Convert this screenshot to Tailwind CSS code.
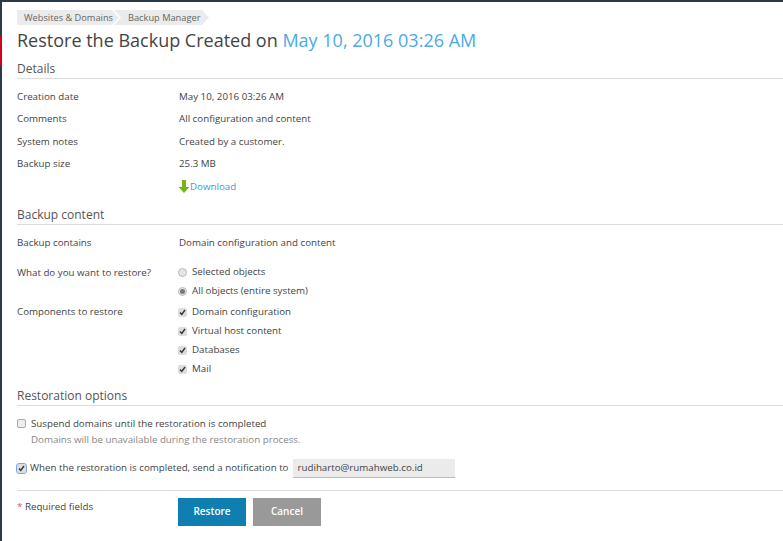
<!DOCTYPE html>
<html lang="en">
<head>
    <meta charset="UTF-8">
    <title>Restore the Backup</title>
    <script src="https://cdn.jsdelivr.net/npm/@tailwindcss/browser@4"></script>
</head>
<body class="bg-white font-['Open_Sans',sans-serif] text-[#444] text-[9.75px] overflow-hidden">
    <div class="relative w-[783px] h-[541px] border-t-2 border-l-2 border-[#2d3a47] pl-[15px]">
        <div class="absolute left-[-2px] top-[34px] w-[2px] h-[30px] bg-[#d0021b]"></div>

        <nav class="flex pt-[8px] h-[23px] text-[#666] text-[9.25px]">
            <span class="w-[102px] bg-[#ebebeb] h-[15px] leading-[15px] pl-[7px] [clip-path:polygon(0_0,95px_0,102px_50%,95px_100%,0_100%)]">Websites &amp; Domains</span>
            <span class="w-[95px] -ml-[5px] bg-[#ebebeb] h-[15px] leading-[15px] pl-[14px] [clip-path:polygon(0_0,88px_0,95px_50%,88px_100%,0_100%,7px_50%)]">Backup Manager</span>
        </nav>
        <h1 class="text-[18px] leading-[30px] text-[#444] h-[30px]">Restore the Backup Created on <span class="text-[#4ba9e8]">May 10, 2016 03:26 AM</span></h1>

        <h2 class="mt-[5px] text-[12px] leading-[18px] border-b border-[#ddd] h-[19px] text-[#555]">Details</h2>
        <div class="mt-[7px] flex flex-col">
            <div class="flex h-[22.4px] leading-[22px]"><div class="w-[162px]">Creation date</div><div>May 10, 2016 03:26 AM</div></div>
            <div class="flex h-[22.4px] leading-[22px]"><div class="w-[162px]">Comments</div><div>All configuration and content</div></div>
            <div class="flex h-[22.4px] leading-[22px]"><div class="w-[162px]">System notes</div><div>Created by a customer.</div></div>
            <div class="flex h-[22.4px] leading-[22px]"><div class="w-[162px]">Backup size</div><div>25.3 MB</div></div>
            <div class="flex h-[22.4px] leading-[22px]">
                <div class="w-[162px]"></div>
                <a class="flex items-center text-[#3d9bd9]">
                    <svg class="w-[12px] h-[13px] -ml-[1px]" viewBox="0 0 12 13"><path d="M4 0h4v7h3.5L6 13 .5 7H4z" fill="#74b816"/></svg>
                    Download
                </a>
            </div>
        </div>

        <h2 class="mt-[8px] text-[12px] leading-[18px] border-b border-[#ddd] h-[19px] text-[#555]">Backup content</h2>
        <div class="mt-[7px] flex h-[22px] leading-[22px]"><div class="w-[162px]">Backup contains</div><div>Domain configuration and content</div></div>
        <div class="mt-[9px] flex">
            <div class="w-[162px] leading-[19px]">What do you want to restore?</div>
            <div class="flex flex-col">
                <label class="flex items-center h-[19px]"><span class="w-[9px] h-[9px] -ml-[1px] rounded-full bg-[#e4e4e4] border border-[#bbb] mr-[5px]"></span>Selected objects</label>
                <label class="flex items-center h-[19px]"><span class="flex items-center justify-center w-[9px] h-[9px] -ml-[1px] rounded-full bg-[#e4e4e4] border border-[#bbb] mr-[5px]"><span class="w-[5px] h-[5px] rounded-full bg-[#777]"></span></span>All objects (entire system)</label>
            </div>
        </div>
        <div class="mt-[2px] flex">
            <div class="w-[162px] leading-[18px]">Components to restore</div>
            <div class="flex flex-col">
                <label class="flex items-center h-[19px]"><span class="flex items-center justify-center w-[9px] h-[9px] -ml-[1px] rounded-[2px] bg-[#ddd] mr-[5px]"><svg class="w-[7px] h-[7px]" viewBox="0 0 7 7"><path d="M1 3.5l1.8 2L6 1" fill="none" stroke="#333" stroke-width="1.4"/></svg></span>Domain configuration</label>
                <label class="flex items-center h-[19px]"><span class="flex items-center justify-center w-[9px] h-[9px] -ml-[1px] rounded-[2px] bg-[#ddd] mr-[5px]"><svg class="w-[7px] h-[7px]" viewBox="0 0 7 7"><path d="M1 3.5l1.8 2L6 1" fill="none" stroke="#333" stroke-width="1.4"/></svg></span>Virtual host content</label>
                <label class="flex items-center h-[19px]"><span class="flex items-center justify-center w-[9px] h-[9px] -ml-[1px] rounded-[2px] bg-[#ddd] mr-[5px]"><svg class="w-[7px] h-[7px]" viewBox="0 0 7 7"><path d="M1 3.5l1.8 2L6 1" fill="none" stroke="#333" stroke-width="1.4"/></svg></span>Databases</label>
                <label class="flex items-center h-[19px]"><span class="flex items-center justify-center w-[9px] h-[9px] -ml-[1px] rounded-[2px] bg-[#ddd] mr-[5px]"><svg class="w-[7px] h-[7px]" viewBox="0 0 7 7"><path d="M1 3.5l1.8 2L6 1" fill="none" stroke="#333" stroke-width="1.4"/></svg></span>Mail</label>
            </div>
        </div>

        <h2 class="mt-[8px] text-[12px] leading-[18px] border-b border-[#ddd] h-[19px] text-[#555]">Restoration options</h2>
        <label class="mt-[9px] flex items-center h-[18px]"><span class="w-[9px] h-[9px] rounded-[2px] bg-[#eee] border border-[#aaa] mr-[5px]"></span>Suspend domains until the restoration is completed</label>
        <p class="pl-[14px] leading-[14px] text-[#888]">Domains will be unavailable during the restoration process.</p>
        <div class="mt-[12px] flex items-center h-[19px]">
            <span class="flex items-center justify-center w-[9px] h-[9px] rounded-[2px] bg-[#ddd] outline outline-[1.5px] outline-[#7aa6e8] mr-[4px]"><svg class="w-[7px] h-[7px]" viewBox="0 0 7 7"><path d="M1 3.5l1.8 2L6 1" fill="none" stroke="#333" stroke-width="1.4"/></svg></span>
            <span>When the restoration is completed, send a notification to</span>
            <span class="ml-[4px] w-[162px] h-[19px] leading-[17px] pl-[5px] bg-[#ebebeb] border-b border-[#b5bcc2]">rudiharto@rumahweb.co.id</span>
        </div>
        <div class="mt-[12px] border-t border-[#ddd] flex pt-[7px]">
            <div class="w-[161px] leading-[18px]"><span class="text-[#d9534f]">*</span> Required fields</div>
            <button class="w-[68px] h-[28px] bg-[#0e7fb0] text-white font-semibold text-[10px]">Restore</button>
            <button class="ml-[7px] w-[68px] h-[28px] bg-[#999] text-white font-semibold text-[10px]">Cancel</button>
        </div>
    </div>
</body>
</html>
